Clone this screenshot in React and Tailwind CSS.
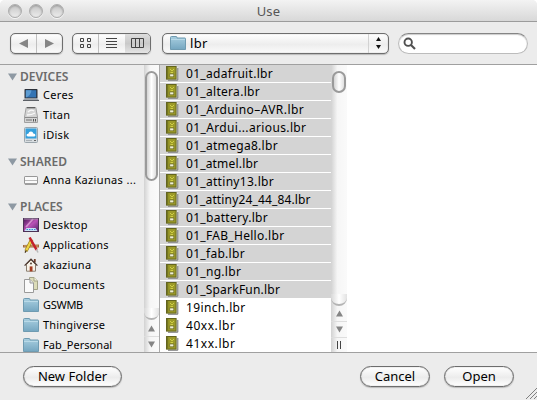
import React from "react";

const FolderIcon = () => (
  <svg width="16" height="14" viewBox="0 0 16 14" className="block">
    <defs>
      <linearGradient id="folder" x1="0" y1="0" x2="0" y2="1">
        <stop offset="0" stopColor="#a9cfe0" />
        <stop offset="1" stopColor="#74a6c0" />
      </linearGradient>
    </defs>
    <path d="M.5 13.5V1.5Q.5.5 1.5.5H6Q7 .5 7 1.5V2H15Q15.5 2 15.5 2.8V13.5Z" fill="url(#folder)" stroke="#6f9bb1" />
    <path d="M1 3.5H15" stroke="#b9dae8" />
  </svg>
);

const LaptopIcon = () => (
  <svg width="16" height="12" viewBox="0 0 16 12">
    <rect x="1.5" y="0" width="13" height="9.5" rx="0.8" fill="#2c313a" />
    <rect x="2.8" y="1.2" width="10.4" height="7.3" fill="#3474b4" />
    <path d="M2.8 8.5C6 7.5 8 4.5 8.5 1.2H2.8Z" fill="#5d9cd2" />
    <path d="M1 9.5H15L16 12H0Z" fill="#9ea3a9" />
    <path d="M0 11.5H16" stroke="#5b5f65" />
  </svg>
);

const DriveIcon = () => (
  <svg width="14" height="16" viewBox="0 0 14 16">
    <path d="M2.2.5H11.8L13.5 10V15.5H.5V10Z" fill="#d4d4d4" stroke="#a0a0a0" />
    <path d="M3 .8H11" stroke="#444" />
    <path d="M4 5Q7 2 10 4M3 8Q8 8 11 6" stroke="#f8f8f8" fill="none" strokeWidth="1.3" />
    <path d="M1 10.5H13" stroke="#8a8a8a" />
    <rect x="2" y="12" width="6" height="2" fill="#a3a3a3" />
    <path d="M9.5 12V14.5M11.5 12V14.5" stroke="#555" />
  </svg>
);

const IDiskIcon = () => (
  <svg width="14" height="16" viewBox="0 0 14 16">
    <rect x="0.5" y="0.5" width="13" height="15" rx="1" fill="#d8dde0" stroke="#9aa5ac" />
    <rect x="1.5" y="1.5" width="11" height="10" fill="#35a0dc" />
    <path d="M4 9.5Q2.3 9.3 2.6 7.7Q3 6.6 4.3 6.7Q5 4.5 7 4.6Q9 4.7 9.3 6.5Q11.5 6.5 11.4 8.2Q11.2 9.5 10 9.5Z" fill="#fff" />
    <path d="M2 13.5H8" stroke="#a9b0b5" />
    <path d="M10 13.5H12" stroke="#666" />
  </svg>
);

const MiniIcon = () => (
  <svg width="14" height="9" viewBox="0 0 14 9">
    <rect x="0.5" y="0.5" width="13" height="7.5" rx="0.6" fill="#fafafa" stroke="#979797" />
    <path d="M1 4.5H13" stroke="#b8b8b8" />
    <path d="M1 8H13" stroke="#777" />
  </svg>
);

const DesktopIcon = () => (
  <svg width="16" height="14" viewBox="0 0 16 14">
    <defs>
      <linearGradient id="aurora" x1="0" y1="0" x2="1" y2="1">
        <stop offset="0" stopColor="#4a1858" />
        <stop offset="0.5" stopColor="#b951b6" />
        <stop offset="1" stopColor="#4d2066" />
      </linearGradient>
    </defs>
    <rect x="0.5" y="0.5" width="15" height="13" fill="url(#aurora)" stroke="#4c3356" />
    <path d="M3 9L10 1" stroke="#eab2e1" strokeWidth="1.8" opacity="0.7" />
    <path d="M1 1H15" stroke="#a58cab" />
    <path d="M1.5 13L3.5 10H12.5L14.5 13Z" fill="#c8e2f5" />
    <path d="M3.5 11.5H12.5" stroke="#3987d4" strokeDasharray="1.5 1" />
  </svg>
);

const ApplicationsIcon = () => (
  <svg width="16" height="16" viewBox="0 0 16 16">
    <path d="M0 8L16 7.4V10.4H0Z" fill="#a06c3c" />
    <path d="M1 9H15" stroke="#d8ac78" />
    <path d="M8.8 2.5L3 14" stroke="#8e7414" strokeWidth="3.4" />
    <path d="M8.8 2.5L3 14" stroke="#f0d444" strokeWidth="2.2" />
    <path d="M6.6 .5L13.6 12.8" stroke="#c4202a" strokeWidth="2.5" />
    <path d="M13.4 12.3L15 15.5" stroke="#b9b9b9" strokeWidth="1.5" />
    <path d="M3.4 13.4L2 15.6" stroke="#443018" strokeWidth="1.2" />
  </svg>
);

const HomeIcon = () => (
  <svg width="14" height="14" viewBox="0 0 14 14">
    <path d="M2.5 6.5L7 2L11.5 6.5V13.2H2.5Z" fill="#f7f2e8" stroke="#8a7d6e" />
    <path d="M10.8 1V4.5" stroke="#713f2b" strokeWidth="1.8" />
    <path d="M.6 7.6L7 1.1L13.4 7.6" fill="none" stroke="#4c3830" strokeWidth="1.3" />
    <rect x="5.7" y="8.4" width="2.8" height="5" fill="#a43b20" />
    <circle cx="7" cy="5.6" r="1" fill="#5c4637" />
  </svg>
);

const DocumentsIcon = () => (
  <svg width="14" height="16" viewBox="0 0 14 16">
    <path d="M5.5.5H10L13.5 4V12.5H5.5Z" fill="#dcdcb8" stroke="#a3a388" />
    <path d="M10 .5V4H13.5" fill="#f4f4dc" stroke="#a3a388" />
    <path d="M.5 2.5H6L9.5 6V15.5H.5Z" fill="#fafafa" stroke="#9a9a9a" />
    <path d="M6 2.5V6H9.5" fill="#e4e4e4" stroke="#9a9a9a" />
  </svg>
);

const LibraryIcon = () => (
  <svg width="13" height="15" viewBox="0 0 13 15" className="block">
    <path d="M2 1.5H12.2V14.6H2Z" fill="#f4f4f4" />
    <path d="M11.8 2V14.2H2" fill="none" stroke="#6f6f6f" />
    <rect x="0.5" y="0.5" width="9.6" height="12.6" fill="#9c9a28" stroke="#63641f" />
    <path d="M1.7 1V12.5" stroke="#6c6e20" />
    <path d="M4 3L6 5L8 3M4.5 6.5H7" stroke="#cfcf45" fill="none" />
    <rect x="3.8" y="8" width="4" height="2.8" fill="#efefd2" stroke="#5e6021" strokeWidth="0.6" />
  </svg>
);

const sections = [
  {
    title: "DEVICES",
    items: [
      { name: "Ceres", Icon: LaptopIcon },
      { name: "Titan", Icon: DriveIcon },
      { name: "iDisk", Icon: IDiskIcon },
    ],
  },
  { title: "SHARED", items: [{ name: "Anna Kaziunas ...", Icon: MiniIcon, spacing: "tracking-[0.35px]" }] },
  {
    title: "PLACES",
    items: [
      { name: "Desktop", Icon: DesktopIcon },
      { name: "Applications", Icon: ApplicationsIcon, spacing: "tracking-[0.2px]" },
      { name: "akaziuna", Icon: HomeIcon },
      { name: "Documents", Icon: DocumentsIcon },
      { name: "GSWMB", Icon: FolderIcon, spacing: "tracking-[-0.3px]" },
      { name: "Thingiverse", Icon: FolderIcon, spacing: "tracking-[0.2px]" },
      { name: "Fab_Personal", Icon: FolderIcon, spacing: "tracking-[0.05px]" },
    ],
  },
];

const files = [
  { name: "01_adafruit.lbr" },
  { name: "01_altera.lbr" },
  { name: "01_Arduino–AVR.lbr", spacing: "tracking-[0.42px]" },
  { name: "01_Ardui...arious.lbr", spacing: "tracking-[0.36px]" },
  { name: "01_atmega8.lbr" },
  { name: "01_atmel.lbr", spacing: "tracking-[0.2px]" },
  { name: "01_attiny13.lbr" },
  { name: "01_attiny24_44_84.lbr", spacing: "tracking-[0.15px]" },
  { name: "01_battery.lbr" },
  { name: "01_FAB_Hello.lbr" },
  { name: "01_fab.lbr" },
  { name: "01_ng.lbr" },
  { name: "01_SparkFun.lbr", spacing: "tracking-[0.22px]" },
  { name: "19inch.lbr", spacing: "tracking-[0.36px]" },
  { name: "40xx.lbr", spacing: "tracking-[0.55px]" },
  { name: "41xx.lbr", spacing: "tracking-[0.55px]" },
];
const selectedCount = 13;

const Arrow = ({ down }) => (
  <svg width="7" height="7" viewBox="0 0 7 7">
    <path d={down ? "M0 .5H7L3.5 6.5Z" : "M0 6.5H7L3.5.5Z"} fill="#858585" />
  </svg>
);

const track = "flex w-[16px] shrink-0 flex-col bg-linear-to-r from-[#d2d2d2] via-[#f6f6f6] via-40% to-[#fafafa]";
const thumb =
  "ml-px mr-px shrink-0 rounded-full border-2 border-[#9a9a9a] bg-linear-to-r from-[#d4d4d4] via-white to-[#e0e0e0]";
const trackEnd = "h-[12px] shrink-0 rounded-b-full border-b-2 border-[#b4b4b4] bg-linear-to-r from-[#d8d8d8] via-white to-[#e2e2e2]";
const arrowCell = "flex shrink-0 items-center justify-center border-t border-[#dedede]";

const pill =
  "flex h-[21px] items-center justify-center rounded-full border border-[#6d6d6d] bg-linear-to-b from-white via-[#ececec] via-55% to-white text-[13px] text-black shadow-[0_1px_1px_#bbb,inset_0_0_1px_#777]";
const control =
  "flex h-[21px] rounded-[5px] border border-[#6e6e6e] bg-linear-to-b from-white via-[#ededed] via-55% to-[#fbfbfb] shadow-[0_1px_1px_#bbb,inset_0_0_1px_#888]";

export default function App() {
  return (
    <div className="flex h-[400px] w-[537px] flex-col overflow-hidden rounded-t-[5px] bg-[#ececec] font-['Noto_Sans','Lucida_Grande',sans-serif] text-black">
      <header className="grid h-[22px] shrink-0 grid-cols-3 items-center border-b border-[#9c9c9c] bg-linear-to-b from-[#f3f3f3] to-[#d8d8d8] pl-2">
        <div className="flex gap-[7px]">
          {[0, 1, 2].map((i) => (
            <span
              key={i}
              className="size-[14px] rounded-full border border-[#adadad] bg-linear-to-b from-[#c6c6c6] to-[#ececec] shadow-[inset_0_1px_2px_#999,0_1px_0_#f4f4f4]"
            />
          ))}
        </div>
        <h1 className="pr-2 text-center text-[13px] leading-5 tracking-[0.2px] text-[#555]">Use</h1>
      </header>

      <div className="flex h-[43px] shrink-0 items-center border-b border-[#a0a0a0] pl-[10px]">
        <div className={`${control} w-[53px]`}>
          <div className="flex flex-1 items-center justify-center border-r border-[#c0c0c0]">
            <svg width="9" height="9" viewBox="0 0 9 9"><path d="M9 0V9L0 4.5Z" fill="#858585" /></svg>
          </div>
          <div className="flex flex-1 items-center justify-center">
            <svg width="9" height="9" viewBox="0 0 9 9"><path d="M0 0V9L9 4.5Z" fill="#858585" /></svg>
          </div>
        </div>

        <div className={`${control} ml-[9px] w-[79px] overflow-hidden`}>
          <div className="flex flex-1 items-center justify-center border-r border-[#c0c0c0]">
            <svg width="11" height="10" viewBox="0 0 11 10" fill="none" stroke="#444">
              <path d="M.5.5h3v3h-3zM7.5.5h3v3h-3zM.5 6.5h3v3h-3zM7.5 6.5h3v3h-3z" />
            </svg>
          </div>
          <div className="flex flex-1 items-center justify-center">
            <svg width="11" height="10" viewBox="0 0 11 10" stroke="#444"><path d="M0 .5H11M0 3.5H11M0 6.5H11M0 9.5H11" /></svg>
          </div>
          <div className="flex flex-1 items-center justify-center bg-linear-to-b from-[#dedede] via-[#c9c9c9] to-[#e4e4e4]">
            <svg width="13" height="10" viewBox="0 0 13 10" fill="none" stroke="#444"><path d="M.5.5h12v9H.5zM4.5 0V10M8.5 0V10" /></svg>
          </div>
        </div>

        <div className={`${control} ml-[11px] w-[227px] items-center`}>
          <div className="ml-[7px]"><FolderIcon /></div>
          <span className="ml-1 flex-1 text-[13px] leading-none tracking-[0.3px]">lbr</span>
          <div className="flex h-full w-[20px] items-center justify-center border-l border-[#d2d2d2]">
            <svg width="5" height="12" viewBox="0 0 5 12"><path d="M0 4H5L2.5 0ZM0 8H5L2.5 12Z" fill="#111" /></svg>
          </div>
        </div>

        <div className="ml-[9px] flex h-[21px] w-[130px] items-center rounded-full border border-[#bcbcbc] border-t-[#858585] bg-white pl-1 shadow-[inset_0_1px_1px_#ccc]">
          <svg width="13" height="13" viewBox="0 0 13 13" fill="none" stroke="#505050">
            <circle cx="5.2" cy="5.2" r="3.7" strokeWidth="1.9" />
            <path d="M8 8L12 12" strokeWidth="2.2" />
          </svg>
        </div>
      </div>

      <main className="flex h-[288px] shrink-0 overflow-hidden border-b border-[#a0a0a0] bg-white">
        <nav className="flex w-[144px] shrink-0 flex-col gap-[9px] overflow-hidden bg-[#ececec] pt-1">
          {sections.map(({ title, items }) => (
            <section key={title}>
              <h2 className="flex h-4 items-center pl-2 text-[12px] leading-4 font-semibold text-[#6b6b6b]">
                <svg width="9" height="8" viewBox="0 0 9 8" className="mr-[3px]"><path d="M0 .5H9L4.5 7.5Z" fill="#8e99a3" /></svg>
                {title}
              </h2>
              {items.map(({ name, Icon, spacing = "tracking-[0.3px]" }) => (
                <div key={name} className={`flex h-5 items-center pl-[23px] text-[11px] whitespace-nowrap ${spacing}`}>
                  <span className="flex w-4 shrink-0 justify-center"><Icon /></span>
                  <span className="ml-1">{name}</span>
                </div>
              ))}
            </section>
          ))}
        </nav>

        <div className={`${track} border-r border-[#aaa]`}>
          <div className={`${thumb} mt-[6px] h-[110px]`} />
          <div className="flex-1" />
          <div className={trackEnd} />
          <div className={`${arrowCell} h-4 border-t-0`}><Arrow /></div>
          <div className={`${arrowCell} h-4`}><Arrow down /></div>
        </div>

        <ul className="w-[171px] shrink-0">
          {files.map(({ name, spacing = "tracking-[0.3px]" }, i) => (
            <li
              key={name}
              className={`flex h-[18px] items-center border-b border-white pl-[6px] text-[12px] whitespace-nowrap ${spacing} ${i < selectedCount ? "bg-[#d4d4d4]" : "bg-white"}`}
            >
              <LibraryIcon />
              <span className="ml-[7px]">{name}</span>
            </li>
          ))}
        </ul>

        <div className={track}>
          <div className={`${thumb} mt-[6px] h-[22px]`} />
          <div className="flex-1" />
          <div className={trackEnd} />
          <div className={`${arrowCell} h-[15px] border-t-0`}><Arrow /></div>
          <div className={`${arrowCell} h-4`}><Arrow down /></div>
          <div className={`${arrowCell} h-[15px] gap-[2px] border-[#ccc]`}>
            <span className="h-[8px] w-px bg-[#444]" />
            <span className="h-[8px] w-px bg-[#444]" />
          </div>
        </div>
      </main>

      <footer className="flex h-[47px] shrink-0 items-start pt-[13px] pl-[23px]">
        <button className={`${pill} w-[99px]`}>New Folder</button>
        <button className={`${pill} ml-[238px] w-[70px]`}>Cancel</button>
        <button className={`${pill} ml-[14px] w-[70px]`}>Open</button>
        <svg width="12" height="12" viewBox="0 0 12 12" className="mt-[21px] ml-[11px]" stroke="#808080">
          <path d="M1 12L12 1M5 12L12 5M9 12L12 9" />
        </svg>
      </footer>
    </div>
  );
}
